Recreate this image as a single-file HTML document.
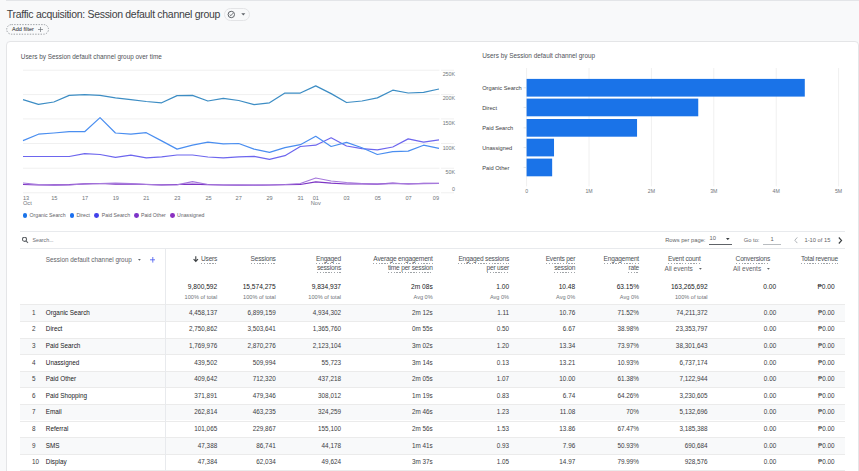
<!DOCTYPE html>
<html><head><meta charset="utf-8"><style>
html,body{margin:0;padding:0;}
body{width:859px;height:471px;overflow:hidden;position:relative;background:#f8f9fa;font-family:"Liberation Sans",sans-serif;}
.t{position:absolute;white-space:nowrap;}
.u{position:relative;display:inline-block;}
.u::after{content:"";position:absolute;left:0;right:0;bottom:-0.7px;height:0.9px;background:repeating-linear-gradient(90deg,#a0a4a8 0 1.4px,transparent 1.4px 2.8px);}
</style></head><body>
<div style="position:absolute;left:6px;top:0px;width:853px;height:1px;background:#e3e5e8"></div>
<div class="t" style="left:6.8px;top:7.10px;font-size:10.5px;line-height:14px;color:#3c4043;font-weight:400;letter-spacing:-0.3px">Traffic acquisition: Session default channel group</div>
<div style="position:absolute;left:223.5px;top:8.2px;width:24.5px;height:10.5px;border:1px solid #e3e4e6;border-radius:7px;box-sizing:content-box"></div>
<svg style="position:absolute;left:227px;top:9.5px" width="9" height="9" viewBox="0 0 9 9"><circle cx="4.3" cy="4.5" r="3.2" fill="none" stroke="#5f6368" stroke-width="1"/><path d="M2.7 4.6 L3.9 5.7 L6 3.2" fill="none" stroke="#5f6368" stroke-width="0.9"/></svg>
<svg style="position:absolute;left:240.5px;top:12.7px" width="5" height="3" viewBox="0 0 5 3"><path d="M0.3 0.3 L4.3 0.3 L2.3 2.5Z" fill="#5f6368"/></svg>
<svg style="position:absolute;left:0;top:0" width="60" height="40"><rect x="6.7" y="24.6" width="41.8" height="9.6" rx="4.8" fill="none" stroke="#80868b" stroke-width="0.75" stroke-dasharray="1.4 1.3"/></svg>
<div class="t" style="left:12.1px;top:25.10px;font-size:5.5px;line-height:8px;color:#202124;font-weight:400;">Add filter</div>
<svg style="position:absolute;left:37.5px;top:26.5px" width="5" height="5" viewBox="0 0 5 5"><path d="M2.5 0 V5 M0 2.5 H5" stroke="#70757a" stroke-width="0.7"/></svg>
<div style="position:absolute;left:6px;top:40.5px;width:853px;height:440px;border:1px solid #e4e5e7;border-radius:4px;background:#fff;box-sizing:border-box"></div>
<div class="t" style="left:20.8px;top:51.50px;font-size:6.4px;line-height:10px;color:#4f5358;font-weight:400;">Users by Session default channel group over time</div>
<svg style="position:absolute;left:0;top:0" width="859" height="471" viewBox="0 0 859 471">
<line x1="23" y1="70.2" x2="439.5" y2="70.2" stroke="#f0f0f0" stroke-width="1"/>
<line x1="441" y1="70.2" x2="454" y2="70.2" stroke="#f0f0f0" stroke-width="1"/>
<line x1="23" y1="94.6" x2="439.5" y2="94.6" stroke="#f0f0f0" stroke-width="1"/>
<line x1="441" y1="94.6" x2="454" y2="94.6" stroke="#f0f0f0" stroke-width="1"/>
<line x1="23" y1="118.9" x2="439.5" y2="118.9" stroke="#f0f0f0" stroke-width="1"/>
<line x1="441" y1="118.9" x2="454" y2="118.9" stroke="#f0f0f0" stroke-width="1"/>
<line x1="23" y1="143.5" x2="439.5" y2="143.5" stroke="#f0f0f0" stroke-width="1"/>
<line x1="441" y1="143.5" x2="454" y2="143.5" stroke="#f0f0f0" stroke-width="1"/>
<line x1="23" y1="168.2" x2="439.5" y2="168.2" stroke="#f0f0f0" stroke-width="1"/>
<line x1="441" y1="168.2" x2="454" y2="168.2" stroke="#f0f0f0" stroke-width="1"/>
<line x1="23" y1="192.8" x2="439.5" y2="192.8" stroke="#f0f0f0" stroke-width="1"/>
<line x1="441" y1="192.8" x2="454" y2="192.8" stroke="#f0f0f0" stroke-width="1"/>
<polyline points="23.00,184.50 38.41,185.00 53.81,184.80 69.22,184.60 84.63,183.80 100.03,183.50 115.44,184.20 130.85,184.00 146.26,184.50 161.66,184.80 177.07,184.50 192.48,184.20 207.88,184.60 223.29,185.00 238.70,185.20 254.10,185.20 269.51,185.00 284.92,184.70 300.33,184.50 315.73,181.80 331.14,183.20 346.55,184.00 361.95,183.80 377.36,184.20 392.77,183.20 408.18,184.00 423.58,183.30 438.99,183.30" fill="none" stroke="#7d35c4" stroke-width="1.2" stroke-linejoin="round"/>
<polyline points="23.00,183.00 38.41,184.50 53.81,185.30 69.22,185.00 84.63,184.00 100.03,183.50 115.44,183.20 130.85,183.60 146.26,184.30 161.66,185.00 177.07,184.80 192.48,181.60 207.88,184.50 223.29,185.00 238.70,185.20 254.10,185.30 269.51,185.00 284.92,184.50 300.33,183.50 315.73,178.00 331.14,181.00 346.55,182.50 361.95,183.50 377.36,184.00 392.77,183.70 408.18,183.50 423.58,183.70 438.99,183.50" fill="none" stroke="#a679dc" stroke-width="1.2" stroke-linejoin="round"/>
<polyline points="23.00,156.50 38.41,156.50 53.81,156.50 69.22,156.50 84.63,153.70 100.03,154.50 115.44,157.30 130.85,155.20 146.26,157.80 161.66,156.80 177.07,155.00 192.48,155.00 207.88,157.00 223.29,157.90 238.70,156.80 254.10,156.30 269.51,159.30 284.92,155.70 300.33,146.50 315.73,145.20 331.14,137.80 346.55,146.00 361.95,148.60 377.36,149.90 392.77,147.00 408.18,138.90 423.58,142.20 438.99,139.90" fill="none" stroke="#6d66ee" stroke-width="1.2" stroke-linejoin="round"/>
<polyline points="23.00,140.60 38.41,134.20 53.81,133.00 69.22,131.70 84.63,131.70 100.03,117.60 115.44,133.00 130.85,134.20 146.26,132.70 161.66,140.90 177.07,149.10 192.48,145.20 207.88,142.20 223.29,143.80 238.70,143.50 254.10,149.10 269.51,152.40 284.92,147.60 300.33,144.70 315.73,136.30 331.14,146.50 346.55,142.40 361.95,147.80 377.36,154.50 392.77,151.60 408.18,151.10 423.58,145.20 438.99,148.30" fill="none" stroke="#4a8ef0" stroke-width="1.2" stroke-linejoin="round"/>
<polyline points="23.00,99.70 38.41,104.30 53.81,102.00 69.22,95.40 84.63,94.60 100.03,95.40 115.44,97.90 130.85,99.70 146.26,101.50 161.66,102.80 177.07,95.60 192.48,95.40 207.88,101.00 223.29,98.40 238.70,100.50 254.10,104.60 269.51,102.80 284.92,93.00 300.33,93.00 315.73,85.90 331.14,93.60 346.55,102.50 361.95,101.00 377.36,97.90 392.77,90.20 408.18,93.00 423.58,92.30 438.99,89.00" fill="none" stroke="#3d8dc4" stroke-width="1.25" stroke-linejoin="round"/>
</svg>
<div class="t" style="right:404.00px;top:68.50px;font-size:5.3px;line-height:10px;color:#70757a;font-weight:400;">250K</div>
<div class="t" style="right:404.00px;top:92.90px;font-size:5.3px;line-height:10px;color:#70757a;font-weight:400;">200K</div>
<div class="t" style="right:404.00px;top:117.50px;font-size:5.3px;line-height:10px;color:#70757a;font-weight:400;">150K</div>
<div class="t" style="right:404.00px;top:142.60px;font-size:5.3px;line-height:10px;color:#70757a;font-weight:400;">100K</div>
<div class="t" style="right:404.00px;top:167.00px;font-size:5.3px;line-height:10px;color:#70757a;font-weight:400;">50K</div>
<div class="t" style="right:404.00px;top:184.00px;font-size:5.3px;line-height:10px;color:#70757a;font-weight:400;">0</div>
<div class="t" style="left:23px;top:192.80px;font-size:5.6px;line-height:10px;color:#70757a;font-weight:400;">13</div>
<div class="t" style="left:23px;top:198.40px;font-size:5.6px;line-height:10px;color:#70757a;font-weight:400;">Oct</div>
<div class="t" style="right:420.00px;top:192.80px;font-size:5.6px;line-height:10px;color:#70757a;font-weight:400;">09</div>
<div class="t" style="left:-45.70px;width:200px;text-align:center;top:193.10px;font-size:5.6px;line-height:10px;color:#70757a;font-weight:400;">15</div>
<div class="t" style="left:-14.90px;width:200px;text-align:center;top:193.10px;font-size:5.6px;line-height:10px;color:#70757a;font-weight:400;">17</div>
<div class="t" style="left:15.80px;width:200px;text-align:center;top:193.10px;font-size:5.6px;line-height:10px;color:#70757a;font-weight:400;">19</div>
<div class="t" style="left:46.30px;width:200px;text-align:center;top:193.10px;font-size:5.6px;line-height:10px;color:#70757a;font-weight:400;">21</div>
<div class="t" style="left:77.30px;width:200px;text-align:center;top:193.10px;font-size:5.6px;line-height:10px;color:#70757a;font-weight:400;">23</div>
<div class="t" style="left:108.50px;width:200px;text-align:center;top:193.10px;font-size:5.6px;line-height:10px;color:#70757a;font-weight:400;">25</div>
<div class="t" style="left:138.70px;width:200px;text-align:center;top:193.10px;font-size:5.6px;line-height:10px;color:#70757a;font-weight:400;">27</div>
<div class="t" style="left:169.50px;width:200px;text-align:center;top:193.10px;font-size:5.6px;line-height:10px;color:#70757a;font-weight:400;">29</div>
<div class="t" style="left:200.50px;width:200px;text-align:center;top:193.10px;font-size:5.6px;line-height:10px;color:#70757a;font-weight:400;">31</div>
<div class="t" style="left:215.80px;width:200px;text-align:center;top:193.10px;font-size:5.6px;line-height:10px;color:#70757a;font-weight:400;">01</div>
<div class="t" style="left:246.60px;width:200px;text-align:center;top:193.10px;font-size:5.6px;line-height:10px;color:#70757a;font-weight:400;">03</div>
<div class="t" style="left:277.80px;width:200px;text-align:center;top:193.10px;font-size:5.6px;line-height:10px;color:#70757a;font-weight:400;">05</div>
<div class="t" style="left:308.50px;width:200px;text-align:center;top:193.10px;font-size:5.6px;line-height:10px;color:#70757a;font-weight:400;">07</div>
<div class="t" style="left:215.80px;width:200px;text-align:center;top:198.40px;font-size:5.6px;line-height:10px;color:#70757a;font-weight:400;">Nov</div>
<div style="position:absolute;left:22.700000000000003px;top:212.9px;width:4.8px;height:4.8px;background:#1a73e8;border-radius:50%"></div>
<div class="t" style="left:29.5px;top:210.40px;font-size:5.2px;line-height:10px;color:#5f6368;font-weight:400;">Organic Search</div>
<div style="position:absolute;left:69.6px;top:212.9px;width:4.8px;height:4.8px;background:#1a6ff0;border-radius:50%"></div>
<div class="t" style="left:76.4px;top:210.40px;font-size:5.2px;line-height:10px;color:#5f6368;font-weight:400;">Direct</div>
<div style="position:absolute;left:94.39999999999999px;top:212.9px;width:4.8px;height:4.8px;background:#4040ea;border-radius:50%"></div>
<div class="t" style="left:101.8px;top:210.40px;font-size:5.2px;line-height:10px;color:#5f6368;font-weight:400;">Paid Search</div>
<div style="position:absolute;left:134.0px;top:212.9px;width:4.8px;height:4.8px;background:#7b33c8;border-radius:50%"></div>
<div class="t" style="left:141px;top:210.40px;font-size:5.2px;line-height:10px;color:#5f6368;font-weight:400;">Paid Other</div>
<div style="position:absolute;left:169.9px;top:212.9px;width:4.8px;height:4.8px;background:#8a2fc0;border-radius:50%"></div>
<div class="t" style="left:177.1px;top:210.40px;font-size:5.2px;line-height:10px;color:#5f6368;font-weight:400;">Unassigned</div>
<div class="t" style="left:482.2px;top:51.40px;font-size:6.4px;line-height:10px;color:#4f5358;font-weight:400;">Users by Session default channel group</div>
<svg style="position:absolute;left:0;top:0" width="859" height="471" viewBox="0 0 859 471">
<line x1="526.60" y1="68" x2="526.60" y2="186.4" stroke="#f0f0f0" stroke-width="1"/>
<line x1="589.00" y1="68" x2="589.00" y2="186.4" stroke="#f0f0f0" stroke-width="1"/>
<line x1="651.40" y1="68" x2="651.40" y2="186.4" stroke="#f0f0f0" stroke-width="1"/>
<line x1="713.80" y1="68" x2="713.80" y2="186.4" stroke="#f0f0f0" stroke-width="1"/>
<line x1="776.20" y1="68" x2="776.20" y2="186.4" stroke="#f0f0f0" stroke-width="1"/>
<line x1="838.60" y1="68" x2="838.60" y2="186.4" stroke="#f0f0f0" stroke-width="1"/>
<rect x="526.6" y="78.9" width="278.19" height="17.7" fill="#1a73e8"/>
<line x1="523.6" y1="87.75" x2="526" y2="87.75" stroke="#dddddd" stroke-width="0.8"/>
<rect x="526.6" y="98.6" width="171.65" height="17.7" fill="#1a73e8"/>
<line x1="523.6" y1="107.45" x2="526" y2="107.45" stroke="#dddddd" stroke-width="0.8"/>
<rect x="526.6" y="119" width="110.45" height="17.7" fill="#1a73e8"/>
<line x1="523.6" y1="127.85" x2="526" y2="127.85" stroke="#dddddd" stroke-width="0.8"/>
<rect x="526.6" y="138.7" width="27.42" height="17.7" fill="#1a73e8"/>
<line x1="523.6" y1="147.55" x2="526" y2="147.55" stroke="#dddddd" stroke-width="0.8"/>
<rect x="526.6" y="158.6" width="25.56" height="17.7" fill="#1a73e8"/>
<line x1="523.6" y1="167.45" x2="526" y2="167.45" stroke="#dddddd" stroke-width="0.8"/>
</svg>
<div class="t" style="left:482.2px;top:82.80px;font-size:5.7px;line-height:10px;color:#3c4043;font-weight:400;">Organic Search</div>
<div class="t" style="left:482.2px;top:102.50px;font-size:5.7px;line-height:10px;color:#3c4043;font-weight:400;">Direct</div>
<div class="t" style="left:482.2px;top:122.90px;font-size:5.7px;line-height:10px;color:#3c4043;font-weight:400;">Paid Search</div>
<div class="t" style="left:482.2px;top:142.60px;font-size:5.7px;line-height:10px;color:#3c4043;font-weight:400;">Unassigned</div>
<div class="t" style="left:482.2px;top:162.50px;font-size:5.7px;line-height:10px;color:#3c4043;font-weight:400;">Paid Other</div>
<div class="t" style="left:426.60px;width:200px;text-align:center;top:185.50px;font-size:5.2px;line-height:10px;color:#70757a;font-weight:400;">0</div>
<div class="t" style="left:489.00px;width:200px;text-align:center;top:185.50px;font-size:5.2px;line-height:10px;color:#70757a;font-weight:400;">1M</div>
<div class="t" style="left:551.40px;width:200px;text-align:center;top:185.50px;font-size:5.2px;line-height:10px;color:#70757a;font-weight:400;">2M</div>
<div class="t" style="left:613.80px;width:200px;text-align:center;top:185.50px;font-size:5.2px;line-height:10px;color:#70757a;font-weight:400;">3M</div>
<div class="t" style="left:676.20px;width:200px;text-align:center;top:185.50px;font-size:5.2px;line-height:10px;color:#70757a;font-weight:400;">4M</div>
<div class="t" style="left:738.60px;width:200px;text-align:center;top:185.50px;font-size:5.2px;line-height:10px;color:#70757a;font-weight:400;">5M</div>
<div style="position:absolute;left:20.4px;top:231px;width:824.8000000000001px;height:1px;background:#e8eaed"></div>
<div style="position:absolute;left:20.4px;top:248px;width:824.8000000000001px;height:1px;background:#e8eaed"></div>
<svg style="position:absolute;left:21.5px;top:237px" width="7" height="7" viewBox="0 0 7 7"><circle cx="2.5" cy="2.3" r="2.05" fill="none" stroke="#5f6368" stroke-width="1.05"/><path d="M4.0 3.8 L6.0 5.8" stroke="#5f6368" stroke-width="1.1"/></svg>
<div class="t" style="left:32.5px;top:235.20px;font-size:5.25px;line-height:10px;color:#6a6e73;font-weight:400;">Search...</div>
<div class="t" style="left:665.2px;top:235.30px;font-size:5.75px;line-height:10px;color:#5f6368;font-weight:400;">Rows per page:</div>
<div class="t" style="left:709.5px;top:233.20px;font-size:5.75px;line-height:10px;color:#5f6368;font-weight:400;">10</div>
<div style="position:absolute;left:709px;top:244px;width:22.6px;height:0.8px;background:#5f6368"></div>
<svg style="position:absolute;left:725.7px;top:237.7px" width="4" height="2.5" viewBox="0 0 4 2.5"><path d="M0 0 H3.6 L1.8 2.2Z" fill="#3c4043"/></svg>
<div class="t" style="left:743.8px;top:235.30px;font-size:5.75px;line-height:10px;color:#5f6368;font-weight:400;">Go to:</div>
<div class="t" style="left:672.20px;width:200px;text-align:center;top:233.50px;font-size:5.75px;line-height:10px;color:#5f6368;font-weight:400;">1</div>
<div style="position:absolute;left:763.1px;top:243.6px;width:17.5px;height:0.8px;background:#b8bcc0"></div>
<svg style="position:absolute;left:793.5px;top:237px" width="4" height="6.5" viewBox="0 0 4 6.5"><path d="M3.3 0.4 L0.8 3.25 L3.3 6.1" fill="none" stroke="#9aa0a6" stroke-width="0.8"/></svg>
<div class="t" style="left:804.5px;top:235.30px;font-size:5.75px;line-height:10px;color:#5f6368;font-weight:400;">1-10 of 15</div>
<svg style="position:absolute;left:838px;top:236.8px" width="4.5" height="7" viewBox="0 0 4.5 7"><path d="M0.8 0.5 L3.6 3.5 L0.8 6.5" fill="none" stroke="#3c4043" stroke-width="1.1"/></svg>
<div class="t" style="left:45.8px;top:254.80px;font-size:6.4px;line-height:10px;color:#5f6368;font-weight:400;">Session default channel group</div>
<svg style="position:absolute;left:138.3px;top:258.8px" width="3" height="2" viewBox="0 0 3 2"><path d="M0 0 H2.8 L1.4 1.8Z" fill="#5f6368"/></svg>
<svg style="position:absolute;left:149.6px;top:257.1px" width="5.6" height="5.6" viewBox="0 0 5.6 5.6"><path d="M2.8 0 V5.6 M0 2.8 H5.6" stroke="#4a5cf0" stroke-width="0.85"/></svg>
<div class="t" style="right:641.80px;top:253.70px;font-size:6.6px;line-height:10px;color:#4d5156;font-weight:400;letter-spacing:-0.2px"><span class="u">Users</span></div>
<svg style="position:absolute;left:192.7px;top:256px" width="6" height="7" viewBox="0 0 6 7"><path d="M2.8 0.3 V5.3 M0.6 3.2 L2.8 5.5 L5 3.2" fill="none" stroke="#3c4043" stroke-width="1.1"/></svg>
<div class="t" style="right:583.30px;top:253.70px;font-size:6.6px;line-height:10px;color:#4d5156;font-weight:400;letter-spacing:-0.2px"><span class="u">Sessions</span></div>
<div class="t" style="right:518.00px;top:253.70px;font-size:6.6px;line-height:10px;color:#4d5156;font-weight:400;letter-spacing:-0.2px"><span class="u">Engaged</span></div>
<div class="t" style="right:518.00px;top:262.70px;font-size:6.6px;line-height:10px;color:#4d5156;font-weight:400;letter-spacing:-0.2px"><span class="u">sessions</span></div>
<div class="t" style="right:426.30px;top:253.70px;font-size:6.6px;line-height:10px;color:#4d5156;font-weight:400;letter-spacing:-0.2px"><span class="u">Average engagement</span></div>
<div class="t" style="right:426.30px;top:262.70px;font-size:6.6px;line-height:10px;color:#4d5156;font-weight:400;letter-spacing:-0.2px"><span class="u">time per session</span></div>
<div class="t" style="right:349.90px;top:253.70px;font-size:6.6px;line-height:10px;color:#4d5156;font-weight:400;letter-spacing:-0.2px"><span class="u">Engaged sessions</span></div>
<div class="t" style="right:349.90px;top:262.70px;font-size:6.6px;line-height:10px;color:#4d5156;font-weight:400;letter-spacing:-0.2px"><span class="u">per user</span></div>
<div class="t" style="right:283.80px;top:253.70px;font-size:6.6px;line-height:10px;color:#4d5156;font-weight:400;letter-spacing:-0.2px"><span class="u">Events per</span></div>
<div class="t" style="right:283.80px;top:262.70px;font-size:6.6px;line-height:10px;color:#4d5156;font-weight:400;letter-spacing:-0.2px"><span class="u">session</span></div>
<div class="t" style="right:220.00px;top:253.70px;font-size:6.6px;line-height:10px;color:#4d5156;font-weight:400;letter-spacing:-0.2px"><span class="u">Engagement</span></div>
<div class="t" style="right:220.00px;top:262.70px;font-size:6.6px;line-height:10px;color:#4d5156;font-weight:400;letter-spacing:-0.2px"><span class="u">rate</span></div>
<div class="t" style="left:668px;top:253.60px;font-size:6.6px;line-height:10px;color:#4d5156;font-weight:400;letter-spacing:-0.2px"><span class="u">Event count</span></div>
<div class="t" style="left:664.6px;top:263.60px;font-size:6.5px;line-height:10px;color:#5f6368;font-weight:400;">All events</div>
<svg style="position:absolute;left:698.5px;top:267.6px" width="3" height="2" viewBox="0 0 3 2"><path d="M0 0 H2.8 L1.4 1.8Z" fill="#5f6368"/></svg>
<div class="t" style="left:735.6px;top:253.60px;font-size:6.6px;line-height:10px;color:#4d5156;font-weight:400;letter-spacing:-0.2px"><span class="u">Conversions</span></div>
<div class="t" style="left:733px;top:263.60px;font-size:6.5px;line-height:10px;color:#5f6368;font-weight:400;">All events</div>
<svg style="position:absolute;left:766.8px;top:267.6px" width="3" height="2" viewBox="0 0 3 2"><path d="M0 0 H2.8 L1.4 1.8Z" fill="#5f6368"/></svg>
<div class="t" style="left:801px;top:253.60px;font-size:6.6px;line-height:10px;color:#4d5156;font-weight:400;letter-spacing:-0.2px"><span class="u">Total revenue</span></div>
<div class="t" style="right:641.80px;top:282.20px;font-size:6.6px;line-height:10px;color:#202124;font-weight:400;">9,800,592</div>
<div class="t" style="right:641.80px;top:291.80px;font-size:5.6px;line-height:10px;color:#6f7479;font-weight:400;">100% of total</div>
<div class="t" style="right:583.30px;top:282.20px;font-size:6.6px;line-height:10px;color:#202124;font-weight:400;">15,574,275</div>
<div class="t" style="right:583.30px;top:291.80px;font-size:5.6px;line-height:10px;color:#6f7479;font-weight:400;">100% of total</div>
<div class="t" style="right:518.00px;top:282.20px;font-size:6.6px;line-height:10px;color:#202124;font-weight:400;">9,834,937</div>
<div class="t" style="right:518.00px;top:291.80px;font-size:5.6px;line-height:10px;color:#6f7479;font-weight:400;">100% of total</div>
<div class="t" style="right:426.30px;top:282.20px;font-size:6.6px;line-height:10px;color:#202124;font-weight:400;">2m 08s</div>
<div class="t" style="right:426.30px;top:291.80px;font-size:5.6px;line-height:10px;color:#6f7479;font-weight:400;">Avg 0%</div>
<div class="t" style="right:349.90px;top:282.20px;font-size:6.6px;line-height:10px;color:#202124;font-weight:400;">1.00</div>
<div class="t" style="right:349.90px;top:291.80px;font-size:5.6px;line-height:10px;color:#6f7479;font-weight:400;">Avg 0%</div>
<div class="t" style="right:283.80px;top:282.20px;font-size:6.6px;line-height:10px;color:#202124;font-weight:400;">10.48</div>
<div class="t" style="right:283.80px;top:291.80px;font-size:5.6px;line-height:10px;color:#6f7479;font-weight:400;">Avg 0%</div>
<div class="t" style="right:220.00px;top:282.20px;font-size:6.6px;line-height:10px;color:#202124;font-weight:400;">63.15%</div>
<div class="t" style="right:220.00px;top:291.80px;font-size:5.6px;line-height:10px;color:#6f7479;font-weight:400;">Avg 0%</div>
<div class="t" style="right:151.40px;top:282.20px;font-size:6.6px;line-height:10px;color:#202124;font-weight:400;">163,265,692</div>
<div class="t" style="right:151.40px;top:291.80px;font-size:5.6px;line-height:10px;color:#6f7479;font-weight:400;">100% of total</div>
<div class="t" style="right:82.80px;top:282.20px;font-size:6.6px;line-height:10px;color:#202124;font-weight:400;">0.00</div>
<div class="t" style="right:24.40px;top:282.20px;font-size:6.6px;line-height:10px;color:#202124;font-weight:400;">₱0.00</div>
<div style="position:absolute;left:20.4px;top:304.3px;width:824.8000000000001px;height:16.6px;background:#f8f9fa"></div>
<div style="position:absolute;left:20.4px;top:304.3px;width:824.8000000000001px;height:1px;background:#ebebeb"></div>
<div class="t" style="left:32px;top:307.80px;font-size:6.35px;line-height:10px;color:#3c4043;font-weight:400;">1</div>
<div class="t" style="left:45.8px;top:307.80px;font-size:6.35px;line-height:10px;color:#202124;font-weight:400;">Organic Search</div>
<div class="t" style="right:641.80px;top:307.80px;font-size:6.35px;line-height:10px;color:#3c4043;font-weight:400;">4,458,137</div>
<div class="t" style="right:583.30px;top:307.80px;font-size:6.35px;line-height:10px;color:#3c4043;font-weight:400;">6,899,159</div>
<div class="t" style="right:518.00px;top:307.80px;font-size:6.35px;line-height:10px;color:#3c4043;font-weight:400;">4,934,302</div>
<div class="t" style="right:426.30px;top:307.80px;font-size:6.35px;line-height:10px;color:#3c4043;font-weight:400;">2m 12s</div>
<div class="t" style="right:349.90px;top:307.80px;font-size:6.35px;line-height:10px;color:#3c4043;font-weight:400;">1.11</div>
<div class="t" style="right:283.80px;top:307.80px;font-size:6.35px;line-height:10px;color:#3c4043;font-weight:400;">10.76</div>
<div class="t" style="right:220.00px;top:307.80px;font-size:6.35px;line-height:10px;color:#3c4043;font-weight:400;">71.52%</div>
<div class="t" style="right:151.40px;top:307.80px;font-size:6.35px;line-height:10px;color:#3c4043;font-weight:400;">74,211,372</div>
<div class="t" style="right:82.80px;top:307.80px;font-size:6.35px;line-height:10px;color:#3c4043;font-weight:400;">0.00</div>
<div class="t" style="right:24.40px;top:307.80px;font-size:6.35px;line-height:10px;color:#3c4043;font-weight:400;">₱0.00</div>
<div style="position:absolute;left:20.4px;top:320.90000000000003px;width:824.8000000000001px;height:1px;background:#ebebeb"></div>
<div class="t" style="left:32px;top:324.40px;font-size:6.35px;line-height:10px;color:#3c4043;font-weight:400;">2</div>
<div class="t" style="left:45.8px;top:324.40px;font-size:6.35px;line-height:10px;color:#202124;font-weight:400;">Direct</div>
<div class="t" style="right:641.80px;top:324.40px;font-size:6.35px;line-height:10px;color:#3c4043;font-weight:400;">2,750,862</div>
<div class="t" style="right:583.30px;top:324.40px;font-size:6.35px;line-height:10px;color:#3c4043;font-weight:400;">3,503,641</div>
<div class="t" style="right:518.00px;top:324.40px;font-size:6.35px;line-height:10px;color:#3c4043;font-weight:400;">1,365,760</div>
<div class="t" style="right:426.30px;top:324.40px;font-size:6.35px;line-height:10px;color:#3c4043;font-weight:400;">0m 55s</div>
<div class="t" style="right:349.90px;top:324.40px;font-size:6.35px;line-height:10px;color:#3c4043;font-weight:400;">0.50</div>
<div class="t" style="right:283.80px;top:324.40px;font-size:6.35px;line-height:10px;color:#3c4043;font-weight:400;">6.67</div>
<div class="t" style="right:220.00px;top:324.40px;font-size:6.35px;line-height:10px;color:#3c4043;font-weight:400;">38.98%</div>
<div class="t" style="right:151.40px;top:324.40px;font-size:6.35px;line-height:10px;color:#3c4043;font-weight:400;">23,353,797</div>
<div class="t" style="right:82.80px;top:324.40px;font-size:6.35px;line-height:10px;color:#3c4043;font-weight:400;">0.00</div>
<div class="t" style="right:24.40px;top:324.40px;font-size:6.35px;line-height:10px;color:#3c4043;font-weight:400;">₱0.00</div>
<div style="position:absolute;left:20.4px;top:337.5px;width:824.8000000000001px;height:16.6px;background:#f8f9fa"></div>
<div style="position:absolute;left:20.4px;top:337.5px;width:824.8000000000001px;height:1px;background:#ebebeb"></div>
<div class="t" style="left:32px;top:341.00px;font-size:6.35px;line-height:10px;color:#3c4043;font-weight:400;">3</div>
<div class="t" style="left:45.8px;top:341.00px;font-size:6.35px;line-height:10px;color:#202124;font-weight:400;">Paid Search</div>
<div class="t" style="right:641.80px;top:341.00px;font-size:6.35px;line-height:10px;color:#3c4043;font-weight:400;">1,769,976</div>
<div class="t" style="right:583.30px;top:341.00px;font-size:6.35px;line-height:10px;color:#3c4043;font-weight:400;">2,870,276</div>
<div class="t" style="right:518.00px;top:341.00px;font-size:6.35px;line-height:10px;color:#3c4043;font-weight:400;">2,123,104</div>
<div class="t" style="right:426.30px;top:341.00px;font-size:6.35px;line-height:10px;color:#3c4043;font-weight:400;">3m 02s</div>
<div class="t" style="right:349.90px;top:341.00px;font-size:6.35px;line-height:10px;color:#3c4043;font-weight:400;">1.20</div>
<div class="t" style="right:283.80px;top:341.00px;font-size:6.35px;line-height:10px;color:#3c4043;font-weight:400;">13.34</div>
<div class="t" style="right:220.00px;top:341.00px;font-size:6.35px;line-height:10px;color:#3c4043;font-weight:400;">73.97%</div>
<div class="t" style="right:151.40px;top:341.00px;font-size:6.35px;line-height:10px;color:#3c4043;font-weight:400;">38,301,643</div>
<div class="t" style="right:82.80px;top:341.00px;font-size:6.35px;line-height:10px;color:#3c4043;font-weight:400;">0.00</div>
<div class="t" style="right:24.40px;top:341.00px;font-size:6.35px;line-height:10px;color:#3c4043;font-weight:400;">₱0.00</div>
<div style="position:absolute;left:20.4px;top:354.1px;width:824.8000000000001px;height:1px;background:#ebebeb"></div>
<div class="t" style="left:32px;top:357.60px;font-size:6.35px;line-height:10px;color:#3c4043;font-weight:400;">4</div>
<div class="t" style="left:45.8px;top:357.60px;font-size:6.35px;line-height:10px;color:#202124;font-weight:400;">Unassigned</div>
<div class="t" style="right:641.80px;top:357.60px;font-size:6.35px;line-height:10px;color:#3c4043;font-weight:400;">439,502</div>
<div class="t" style="right:583.30px;top:357.60px;font-size:6.35px;line-height:10px;color:#3c4043;font-weight:400;">509,994</div>
<div class="t" style="right:518.00px;top:357.60px;font-size:6.35px;line-height:10px;color:#3c4043;font-weight:400;">55,723</div>
<div class="t" style="right:426.30px;top:357.60px;font-size:6.35px;line-height:10px;color:#3c4043;font-weight:400;">3m 14s</div>
<div class="t" style="right:349.90px;top:357.60px;font-size:6.35px;line-height:10px;color:#3c4043;font-weight:400;">0.13</div>
<div class="t" style="right:283.80px;top:357.60px;font-size:6.35px;line-height:10px;color:#3c4043;font-weight:400;">13.21</div>
<div class="t" style="right:220.00px;top:357.60px;font-size:6.35px;line-height:10px;color:#3c4043;font-weight:400;">10.93%</div>
<div class="t" style="right:151.40px;top:357.60px;font-size:6.35px;line-height:10px;color:#3c4043;font-weight:400;">6,737,174</div>
<div class="t" style="right:82.80px;top:357.60px;font-size:6.35px;line-height:10px;color:#3c4043;font-weight:400;">0.00</div>
<div class="t" style="right:24.40px;top:357.60px;font-size:6.35px;line-height:10px;color:#3c4043;font-weight:400;">₱0.00</div>
<div style="position:absolute;left:20.4px;top:370.70000000000005px;width:824.8000000000001px;height:16.6px;background:#f8f9fa"></div>
<div style="position:absolute;left:20.4px;top:370.70000000000005px;width:824.8000000000001px;height:1px;background:#ebebeb"></div>
<div class="t" style="left:32px;top:374.20px;font-size:6.35px;line-height:10px;color:#3c4043;font-weight:400;">5</div>
<div class="t" style="left:45.8px;top:374.20px;font-size:6.35px;line-height:10px;color:#202124;font-weight:400;">Paid Other</div>
<div class="t" style="right:641.80px;top:374.20px;font-size:6.35px;line-height:10px;color:#3c4043;font-weight:400;">409,642</div>
<div class="t" style="right:583.30px;top:374.20px;font-size:6.35px;line-height:10px;color:#3c4043;font-weight:400;">712,320</div>
<div class="t" style="right:518.00px;top:374.20px;font-size:6.35px;line-height:10px;color:#3c4043;font-weight:400;">437,218</div>
<div class="t" style="right:426.30px;top:374.20px;font-size:6.35px;line-height:10px;color:#3c4043;font-weight:400;">2m 05s</div>
<div class="t" style="right:349.90px;top:374.20px;font-size:6.35px;line-height:10px;color:#3c4043;font-weight:400;">1.07</div>
<div class="t" style="right:283.80px;top:374.20px;font-size:6.35px;line-height:10px;color:#3c4043;font-weight:400;">10.00</div>
<div class="t" style="right:220.00px;top:374.20px;font-size:6.35px;line-height:10px;color:#3c4043;font-weight:400;">61.38%</div>
<div class="t" style="right:151.40px;top:374.20px;font-size:6.35px;line-height:10px;color:#3c4043;font-weight:400;">7,122,944</div>
<div class="t" style="right:82.80px;top:374.20px;font-size:6.35px;line-height:10px;color:#3c4043;font-weight:400;">0.00</div>
<div class="t" style="right:24.40px;top:374.20px;font-size:6.35px;line-height:10px;color:#3c4043;font-weight:400;">₱0.00</div>
<div style="position:absolute;left:20.4px;top:387.3px;width:824.8000000000001px;height:1px;background:#ebebeb"></div>
<div class="t" style="left:32px;top:390.80px;font-size:6.35px;line-height:10px;color:#3c4043;font-weight:400;">6</div>
<div class="t" style="left:45.8px;top:390.80px;font-size:6.35px;line-height:10px;color:#202124;font-weight:400;">Paid Shopping</div>
<div class="t" style="right:641.80px;top:390.80px;font-size:6.35px;line-height:10px;color:#3c4043;font-weight:400;">371,891</div>
<div class="t" style="right:583.30px;top:390.80px;font-size:6.35px;line-height:10px;color:#3c4043;font-weight:400;">479,346</div>
<div class="t" style="right:518.00px;top:390.80px;font-size:6.35px;line-height:10px;color:#3c4043;font-weight:400;">308,012</div>
<div class="t" style="right:426.30px;top:390.80px;font-size:6.35px;line-height:10px;color:#3c4043;font-weight:400;">1m 19s</div>
<div class="t" style="right:349.90px;top:390.80px;font-size:6.35px;line-height:10px;color:#3c4043;font-weight:400;">0.83</div>
<div class="t" style="right:283.80px;top:390.80px;font-size:6.35px;line-height:10px;color:#3c4043;font-weight:400;">6.74</div>
<div class="t" style="right:220.00px;top:390.80px;font-size:6.35px;line-height:10px;color:#3c4043;font-weight:400;">64.26%</div>
<div class="t" style="right:151.40px;top:390.80px;font-size:6.35px;line-height:10px;color:#3c4043;font-weight:400;">3,230,605</div>
<div class="t" style="right:82.80px;top:390.80px;font-size:6.35px;line-height:10px;color:#3c4043;font-weight:400;">0.00</div>
<div class="t" style="right:24.40px;top:390.80px;font-size:6.35px;line-height:10px;color:#3c4043;font-weight:400;">₱0.00</div>
<div style="position:absolute;left:20.4px;top:403.90000000000003px;width:824.8000000000001px;height:16.6px;background:#f8f9fa"></div>
<div style="position:absolute;left:20.4px;top:403.90000000000003px;width:824.8000000000001px;height:1px;background:#ebebeb"></div>
<div class="t" style="left:32px;top:407.40px;font-size:6.35px;line-height:10px;color:#3c4043;font-weight:400;">7</div>
<div class="t" style="left:45.8px;top:407.40px;font-size:6.35px;line-height:10px;color:#202124;font-weight:400;">Email</div>
<div class="t" style="right:641.80px;top:407.40px;font-size:6.35px;line-height:10px;color:#3c4043;font-weight:400;">262,814</div>
<div class="t" style="right:583.30px;top:407.40px;font-size:6.35px;line-height:10px;color:#3c4043;font-weight:400;">463,235</div>
<div class="t" style="right:518.00px;top:407.40px;font-size:6.35px;line-height:10px;color:#3c4043;font-weight:400;">324,259</div>
<div class="t" style="right:426.30px;top:407.40px;font-size:6.35px;line-height:10px;color:#3c4043;font-weight:400;">2m 46s</div>
<div class="t" style="right:349.90px;top:407.40px;font-size:6.35px;line-height:10px;color:#3c4043;font-weight:400;">1.23</div>
<div class="t" style="right:283.80px;top:407.40px;font-size:6.35px;line-height:10px;color:#3c4043;font-weight:400;">11.08</div>
<div class="t" style="right:220.00px;top:407.40px;font-size:6.35px;line-height:10px;color:#3c4043;font-weight:400;">70%</div>
<div class="t" style="right:151.40px;top:407.40px;font-size:6.35px;line-height:10px;color:#3c4043;font-weight:400;">5,132,696</div>
<div class="t" style="right:82.80px;top:407.40px;font-size:6.35px;line-height:10px;color:#3c4043;font-weight:400;">0.00</div>
<div class="t" style="right:24.40px;top:407.40px;font-size:6.35px;line-height:10px;color:#3c4043;font-weight:400;">₱0.00</div>
<div style="position:absolute;left:20.4px;top:420.5px;width:824.8000000000001px;height:1px;background:#ebebeb"></div>
<div class="t" style="left:32px;top:424.00px;font-size:6.35px;line-height:10px;color:#3c4043;font-weight:400;">8</div>
<div class="t" style="left:45.8px;top:424.00px;font-size:6.35px;line-height:10px;color:#202124;font-weight:400;">Referral</div>
<div class="t" style="right:641.80px;top:424.00px;font-size:6.35px;line-height:10px;color:#3c4043;font-weight:400;">101,065</div>
<div class="t" style="right:583.30px;top:424.00px;font-size:6.35px;line-height:10px;color:#3c4043;font-weight:400;">229,867</div>
<div class="t" style="right:518.00px;top:424.00px;font-size:6.35px;line-height:10px;color:#3c4043;font-weight:400;">155,100</div>
<div class="t" style="right:426.30px;top:424.00px;font-size:6.35px;line-height:10px;color:#3c4043;font-weight:400;">2m 56s</div>
<div class="t" style="right:349.90px;top:424.00px;font-size:6.35px;line-height:10px;color:#3c4043;font-weight:400;">1.53</div>
<div class="t" style="right:283.80px;top:424.00px;font-size:6.35px;line-height:10px;color:#3c4043;font-weight:400;">13.86</div>
<div class="t" style="right:220.00px;top:424.00px;font-size:6.35px;line-height:10px;color:#3c4043;font-weight:400;">67.47%</div>
<div class="t" style="right:151.40px;top:424.00px;font-size:6.35px;line-height:10px;color:#3c4043;font-weight:400;">3,185,388</div>
<div class="t" style="right:82.80px;top:424.00px;font-size:6.35px;line-height:10px;color:#3c4043;font-weight:400;">0.00</div>
<div class="t" style="right:24.40px;top:424.00px;font-size:6.35px;line-height:10px;color:#3c4043;font-weight:400;">₱0.00</div>
<div style="position:absolute;left:20.4px;top:437.1px;width:824.8000000000001px;height:16.6px;background:#f8f9fa"></div>
<div style="position:absolute;left:20.4px;top:437.1px;width:824.8000000000001px;height:1px;background:#ebebeb"></div>
<div class="t" style="left:32px;top:440.60px;font-size:6.35px;line-height:10px;color:#3c4043;font-weight:400;">9</div>
<div class="t" style="left:45.8px;top:440.60px;font-size:6.35px;line-height:10px;color:#202124;font-weight:400;">SMS</div>
<div class="t" style="right:641.80px;top:440.60px;font-size:6.35px;line-height:10px;color:#3c4043;font-weight:400;">47,388</div>
<div class="t" style="right:583.30px;top:440.60px;font-size:6.35px;line-height:10px;color:#3c4043;font-weight:400;">86,741</div>
<div class="t" style="right:518.00px;top:440.60px;font-size:6.35px;line-height:10px;color:#3c4043;font-weight:400;">44,178</div>
<div class="t" style="right:426.30px;top:440.60px;font-size:6.35px;line-height:10px;color:#3c4043;font-weight:400;">1m 41s</div>
<div class="t" style="right:349.90px;top:440.60px;font-size:6.35px;line-height:10px;color:#3c4043;font-weight:400;">0.93</div>
<div class="t" style="right:283.80px;top:440.60px;font-size:6.35px;line-height:10px;color:#3c4043;font-weight:400;">7.96</div>
<div class="t" style="right:220.00px;top:440.60px;font-size:6.35px;line-height:10px;color:#3c4043;font-weight:400;">50.93%</div>
<div class="t" style="right:151.40px;top:440.60px;font-size:6.35px;line-height:10px;color:#3c4043;font-weight:400;">690,684</div>
<div class="t" style="right:82.80px;top:440.60px;font-size:6.35px;line-height:10px;color:#3c4043;font-weight:400;">0.00</div>
<div class="t" style="right:24.40px;top:440.60px;font-size:6.35px;line-height:10px;color:#3c4043;font-weight:400;">₱0.00</div>
<div style="position:absolute;left:20.4px;top:453.70000000000005px;width:824.8000000000001px;height:1px;background:#ebebeb"></div>
<div class="t" style="left:32px;top:457.20px;font-size:6.35px;line-height:10px;color:#3c4043;font-weight:400;">10</div>
<div class="t" style="left:45.8px;top:457.20px;font-size:6.35px;line-height:10px;color:#202124;font-weight:400;">Display</div>
<div class="t" style="right:641.80px;top:457.20px;font-size:6.35px;line-height:10px;color:#3c4043;font-weight:400;">47,384</div>
<div class="t" style="right:583.30px;top:457.20px;font-size:6.35px;line-height:10px;color:#3c4043;font-weight:400;">62,034</div>
<div class="t" style="right:518.00px;top:457.20px;font-size:6.35px;line-height:10px;color:#3c4043;font-weight:400;">49,624</div>
<div class="t" style="right:426.30px;top:457.20px;font-size:6.35px;line-height:10px;color:#3c4043;font-weight:400;">3m 37s</div>
<div class="t" style="right:349.90px;top:457.20px;font-size:6.35px;line-height:10px;color:#3c4043;font-weight:400;">1.05</div>
<div class="t" style="right:283.80px;top:457.20px;font-size:6.35px;line-height:10px;color:#3c4043;font-weight:400;">14.97</div>
<div class="t" style="right:220.00px;top:457.20px;font-size:6.35px;line-height:10px;color:#3c4043;font-weight:400;">79.99%</div>
<div class="t" style="right:151.40px;top:457.20px;font-size:6.35px;line-height:10px;color:#3c4043;font-weight:400;">928,576</div>
<div class="t" style="right:82.80px;top:457.20px;font-size:6.35px;line-height:10px;color:#3c4043;font-weight:400;">0.00</div>
<div class="t" style="right:24.40px;top:457.20px;font-size:6.35px;line-height:10px;color:#3c4043;font-weight:400;">₱0.00</div>
<div style="position:absolute;left:20.4px;top:470.3px;width:824.8000000000001px;height:1px;background:#ebebeb"></div>
<div style="position:absolute;left:165px;top:248px;width:1px;height:230px;background:#e8eaed"></div>
</body></html>
